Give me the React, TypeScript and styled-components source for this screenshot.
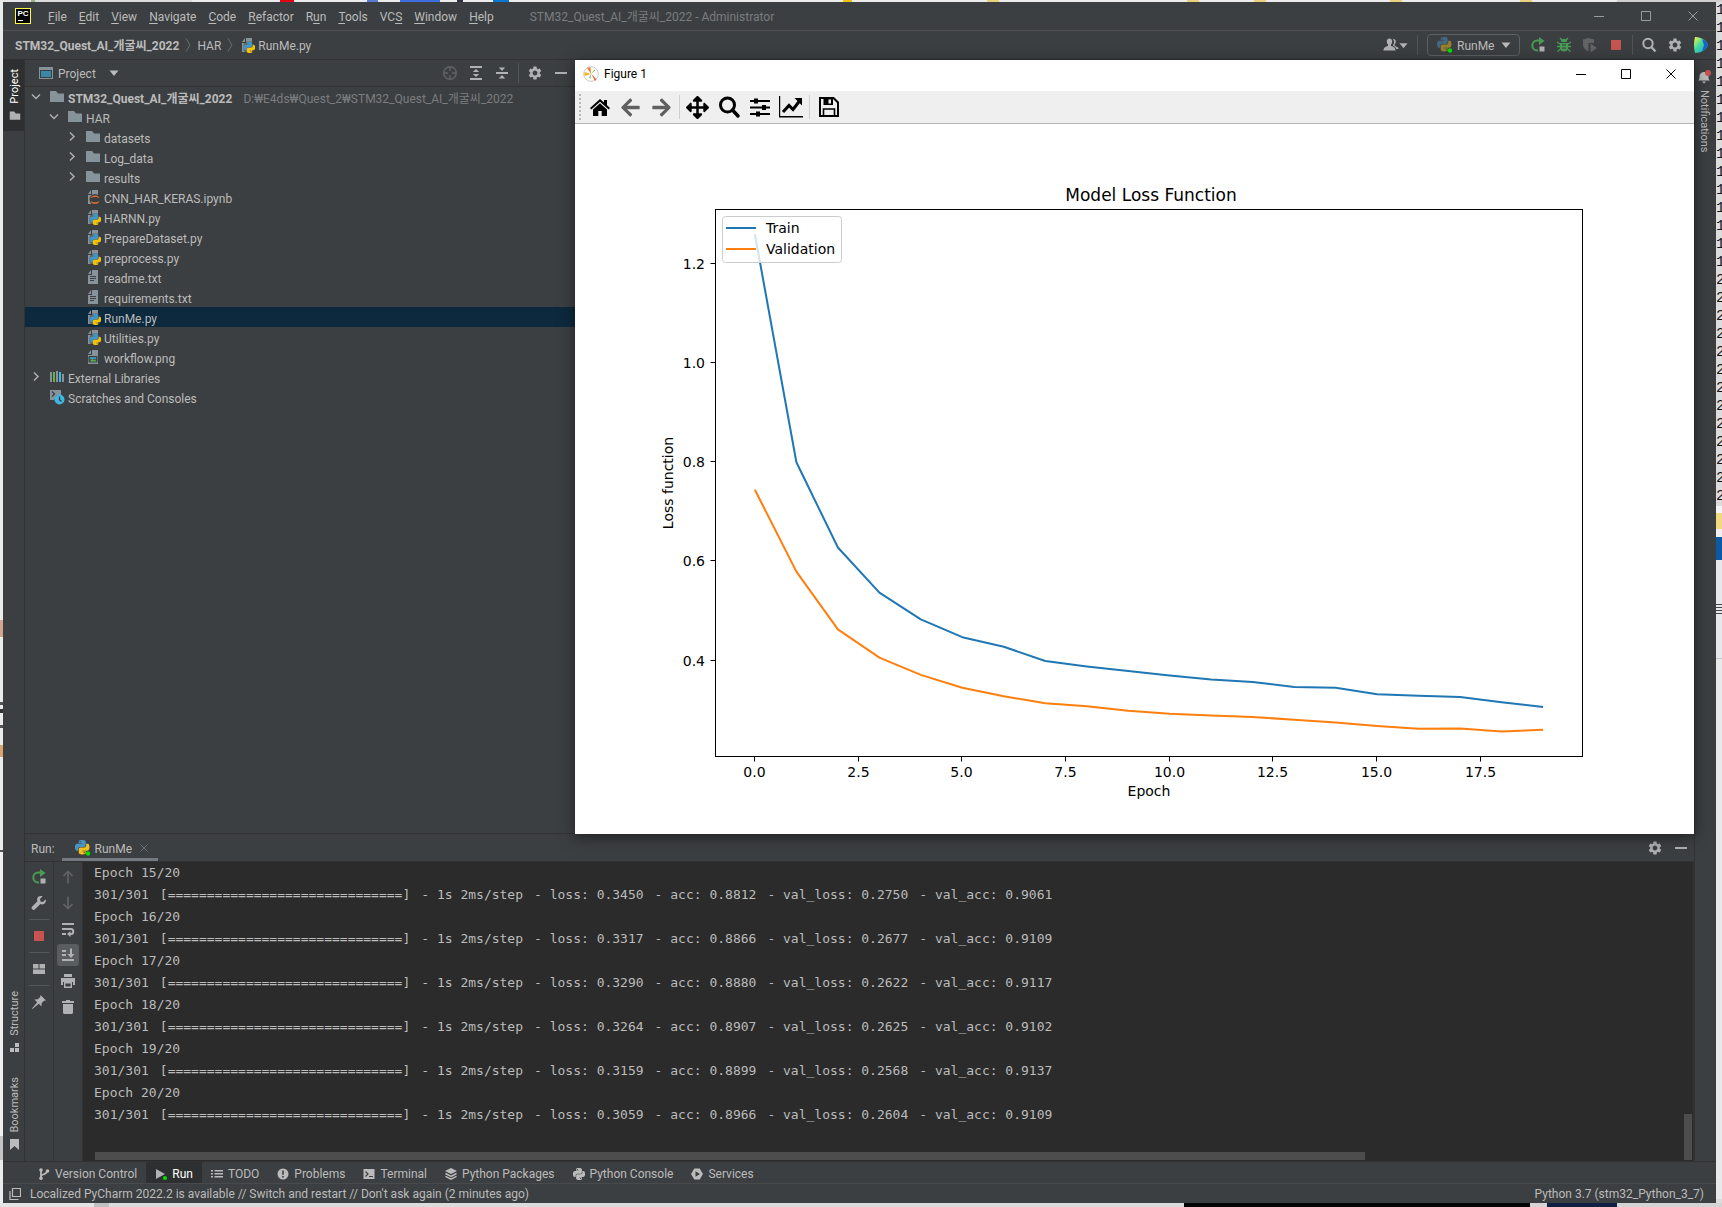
import React from 'react';
import styled, { createGlobalStyle, css } from 'styled-components';
import { MdSettings } from 'react-icons/md';
import { FaArrowLeft, FaArrowRight, FaArrowsAlt } from 'react-icons/fa';

const c = {
  panel: '#3c3f41',
  line: '#323232',
  seam: '#515151',
  text: '#bbbbbb',
  dim: '#7a7d7f',
  icon: '#afb1b3',
  faint: '#616365',
  console: '#2b2b2b',
  file: '#87939a',
  green: '#499c54',
  red: '#c75450',
};
const ui = `Roboto, "Noto Sans CJK KR", sans-serif`;

const GlobalStyle = createGlobalStyle`
  *, *::before, *::after { box-sizing: border-box; }
  html, body, #root { height: 100%; }
  body { margin: 0; overflow: hidden; font-family: ${ui}; font-size: 12px; line-height: 16px; color: ${c.text}; background: #e4e6e6; }
  button, select { font: inherit; color: inherit; background: none; border: 0; padding: 0; margin: 0; }
  ul { list-style: none; margin: 0; padding: 0; }
  svg { display: block; flex: none; }
`;

/* ---------- desktop and outer frame ---------- */

const Desktop = styled.div`
  height: 100vh;
  display: grid;
  grid-template-columns: 3px minmax(0, 1fr) 6px;
  grid-template-rows: 2px minmax(0, 1fr) 4px;
`;
const TopSliver = styled.div`
  grid-column: 1 / -1;
  background: linear-gradient(90deg, #e6e6e6 0 31px, #9ab07c 31px 35px, #dcdcdc 35px 192px, #ececec 192px 280px, #e60012 280px 294px, #ececec 294px 367px, #5a7ad8 367px 378px, #ececec 378px 400px, #3d6fe0 400px 440px, #ececec 440px 457px, #2f3440 457px 463px, #ececec 463px 493px, #0a78d4 493px 509px, #ececec 509px 843px, #f0c400 843px 852px, #ececec 852px 987px, #e8d27c 987px 999px, #ececec 999px 1187px, #e8d27c 1187px 1199px, #ececec 1199px 1254px, #e8d27c 1254px 1266px, #ececec 1266px 1390px, #e8d27c 1390px 1402px, #ececec 1402px 1520px, #e8d27c 1520px 1532px, #ececec 1532px 1617px, #cfcfcf 1617px);
`;
const LeftSliver = styled.div`
  background: linear-gradient(180deg, #e9eceb 0 618px, #d3a58e 618px 635px, #e9eceb 635px 700px, #555 700px 703px, #e9eceb 703px 707px, #333 707px 711px, #e9eceb 711px 723px, #555 723px 726px, #e9eceb 726px 743px, #d9a46e 743px 755px, #e9eceb 755px 848px, #555 848px 850px, #f0f0f0 850px 1134px, #c4c4c4 1134px 1158px, #e9eceb 1158px);
`;
const BottomSliver = styled.div`
  grid-column: 1 / -1;
  background: linear-gradient(90deg, #e4e4e4 0 94px, #c0c0c0 94px 109px, #dcdcdc 109px 1184px, #050505 1184px 1530px, #d8d4d6 1530px 1547px, #101f42 1547px 1617px, #d4d4d4 1617px);
`;
const RightSliver = styled.div`
  overflow: hidden;
  background: #dcdcdc;
  color: #14141e;
  font: 15px/18px "Liberation Mono", monospace;
  display: flex;
  flex-direction: column;
`;
const Swatch = styled.div<{ $h: number; $bg: string }>`
  flex: none;
  height: ${p => p.$h}px;
  background: ${p => p.$bg};
`;
const Ide = styled.div`
  background: ${c.panel};
  display: flex;
  flex-direction: column;
  min-width: 0;
  min-height: 0;
`;

/* ---------- shared pieces ---------- */

const IconButton = styled.button<{ $w?: number; $h?: number; $on?: boolean; $fg?: string }>`
  flex: none;
  display: flex;
  align-items: center;
  justify-content: center;
  width: ${p => p.$w ?? 26}px;
  height: ${p => p.$h ?? 22}px;
  border-radius: 3px;
  color: ${p => p.$fg ?? c.icon};
  background: ${p => (p.$on ? '#5a5d5f' : 'transparent')};
`;
const VRule = styled.span<{ $h?: number; $m?: number; $c?: string }>`
  flex: none;
  width: 1px;
  height: ${p => p.$h ?? 20}px;
  margin: 0 ${p => p.$m ?? 4}px;
  background: ${p => p.$c ?? '#515457'};
`;
const Spacer = styled.span`
  flex: 1;
`;

/* ---------- title / menu bar ---------- */

const MenuBar = styled.header`
  flex: none;
  height: 29px;
  display: flex;
  align-items: center;
  padding-left: 12px;
  border-bottom: 1px solid ${c.seam};
`;
const Logo = styled.span`
  width: 16px;
  height: 16px;
  margin-right: 11px;
  border: 1px solid #fcf84a;
  background: #000;
  color: #fff;
  font: bold 8px/9px "Liberation Sans", sans-serif;
  text-align: center;
  &::after {
    content: '';
    display: block;
    width: 5px;
    height: 1px;
    margin: 2px 0 0 2px;
    background: #fff;
  }
`;
const MenuItem = styled.button`
  padding: 2px 6px 0;
  u { text-underline-offset: 2px; }
`;
const WindowTitle = styled.span`
  margin-left: 30px;
  padding-top: 1px;
  color: ${c.dim};
`;
const WindowButtons = styled.div<{ $fg: string }>`
  display: flex;
  color: ${p => p.$fg};
`;

/* ---------- navigation bar ---------- */

const NavBar = styled.nav`
  flex: none;
  height: 29px;
  display: flex;
  align-items: center;
  padding: 0 2px 0 12px;
  border-bottom: 1px solid ${c.line};
`;
const Crumb = styled.a<{ $bold?: boolean }>`
  display: flex;
  align-items: center;
  gap: 3px;
  color: inherit;
  text-decoration: none;
  font-weight: ${p => (p.$bold ? 700 : 400)};
  span { padding-top: 2px; }
`;
const RunConfig = styled.label`
  width: 93px;
  height: 22px;
  margin: 0 5px 0 5px;
  padding: 0 8px 0 9px;
  display: flex;
  align-items: center;
  gap: 4px;
  border: 1px solid #5e6163;
  border-radius: 4px;
`;
const BareSelect = styled.select`
  appearance: none;
  flex: 1;
  min-width: 0;
  padding-top: 2px;
  outline: 0;
`;

/* ---------- body ---------- */

const Body = styled.div`
  flex: 1;
  min-height: 0;
  display: flex;
`;
const Stripe = styled.aside<{ $side: 'left' | 'right' }>`
  flex: none;
  width: 22px;
  display: flex;
  flex-direction: column;
  font-size: 11px;
  ${p => (p.$side === 'left' ? css`border-right: 1px solid ${c.line}; padding-bottom: 11px;` : css`border-left: 1px solid ${c.line};`)}
`;
const StripeTab = styled.button<{ $active?: boolean; $flip?: boolean; $h?: number }>`
  flex: none;
  width: 21px;
  height: ${p => p.$h ?? 86}px;
  display: flex;
  flex-direction: column;
  align-items: center;
  justify-content: ${p => (p.$active ? 'center' : p.$flip ? 'flex-end' : 'flex-start')};
  gap: 6px;
  background: ${p => (p.$active ? '#2d2f30' : 'transparent')};
  color: ${p => (p.$active ? '#ffffff' : c.text)};
  padding: ${p => (p.$flip ? '0 0 0 2px' : '10px 3px 0 0')};
  span {
    writing-mode: vertical-rl;
    transform: ${p => (p.$flip ? 'rotate(180deg)' : 'none')};
  }
`;
const Center = styled.main`
  flex: 1;
  min-width: 0;
  display: flex;
  flex-direction: column;
`;
const Upper = styled.div`
  flex: 1;
  min-height: 0;
  display: flex;
`;

const ProjectPane = styled.section`
  flex: none;
  width: 550px;
  border-bottom: 1px solid ${c.line};
`;
const PaneHeader = styled.div`
  height: 27px;
  display: flex;
  align-items: center;
  padding: 0 1px 0 13px;
  border-bottom: 1px solid ${c.line};
`;
const ViewPicker = styled.label`
  display: flex;
  align-items: center;
  gap: 4px;
  width: 81px;
`;
const TreeRow = styled.li<{ $depth: number; $selected?: boolean }>`
  height: 20px;
  display: flex;
  align-items: center;
  padding-left: ${p => 3 + p.$depth * 18}px;
  background: ${p => (p.$selected ? '#0d293e' : 'transparent')};
  white-space: nowrap;
`;
const Twisty = styled.span`
  width: 16px;
  margin-right: 5px;
  display: flex;
  justify-content: center;
  color: #adadad;
`;
const TreeLabel = styled.span<{ $bold?: boolean }>`
  margin-left: 3px;
  padding-top: 3px;
  font-weight: ${p => (p.$bold ? 700 : 400)};
`;
const TreePath = styled.span`
  margin-left: 11px;
  padding-top: 3px;
  color: ${c.dim};
`;

/* ---------- matplotlib window ---------- */

const Figure = styled.section`
  flex: 1;
  min-width: 0;
  position: relative;
  z-index: 1;
  display: flex;
  flex-direction: column;
  background: #fff;
  color: #000;
  box-shadow: 0 3px 14px rgba(0, 0, 0, 0.5);
`;
const FigureTitle = styled.div`
  flex: none;
  height: 31px;
  display: flex;
  align-items: center;
  gap: 5px;
  padding: 0 1px 3px 8px;
`;
const FigureTools = styled.div`
  flex: none;
  height: 33px;
  display: flex;
  align-items: center;
  padding-left: 4px;
  background: #efefef;
  border-bottom: 1px solid #b4b4b4;
`;
const Grip = styled.span`
  width: 2px;
  height: 26px;
  margin-right: 3px;
  background: repeating-linear-gradient(180deg, #b9b9b9 0 2px, transparent 2px 4px);
`;
const Canvas = styled.div`
  flex: 1;
  min-height: 0;
  svg { width: 100%; height: 100%; }
  text { font-family: "DejaVu Sans", sans-serif; font-size: 14px; }
`;

/* ---------- run panel ---------- */

const RunPanel = styled.section`
  flex: none;
  height: 327px;
  display: flex;
  flex-direction: column;
`;
const RunHeader = styled.div`
  flex: none;
  height: 28px;
  display: flex;
  align-items: center;
  padding-left: 6px;
  border-bottom: 1px solid ${c.line};
  > span { padding-top: 2px; }
`;
const RunTab = styled.button`
  align-self: stretch;
  width: 96px;
  margin-left: 7px;
  padding: 3px 10px 0 13px;
  display: flex;
  align-items: center;
  gap: 4px;
  border-bottom: 3px solid #747a80;
  span { padding-top: 2px; }
`;
const RunBody = styled.div`
  flex: 1;
  min-height: 0;
  display: flex;
`;
const ToolColumn = styled.div`
  flex: none;
  width: 29px;
  display: flex;
  flex-direction: column;
  align-items: center;
  padding-top: 4px;
  gap: 4px;
  border-right: 1px solid ${c.line};
`;
const HRule = styled.span`
  width: 20px;
  height: 1px;
  margin: 1px 0;
  background: #55585a;
`;
const Console = styled.div`
  flex: 1;
  min-width: 0;
  display: grid;
  grid-template: "out bar" minmax(0, 1fr) "scroll bar" 9px / minmax(0, 1fr) 10px;
  background: ${c.console};
  border-right: 1px solid ${c.line};
`;
const Output = styled.div`
  grid-area: out;
  padding-left: 11px;
  font: 13px/22px "DejaVu Sans Mono", monospace;
`;
const OutputLine = styled.div`
  display: flex;
  gap: 11px;
  white-space: pre;
`;
const VTrack = styled.div`
  grid-area: bar;
  display: flex;
  align-items: flex-end;
  padding: 0 1px 1px;
  &::after { content: ''; flex: 1; height: 46px; background: #4d4d4d; }
`;
const HTrack = styled.div`
  grid-area: scroll;
  padding: 0 0 1px 12px;
  &::after { content: ''; display: block; width: 80%; height: 8px; background: #4d4d4d; }
`;

/* ---------- bottom bars ---------- */

const ToolTabs = styled.div`
  flex: none;
  height: 23px;
  display: flex;
  padding-left: 26px;
  border-top: 1px solid ${c.line};
  border-bottom: 1px solid #484a4c;
`;
const ToolTab = styled.button<{ $active?: boolean }>`
  display: flex;
  align-items: center;
  gap: 5px;
  padding: 2px 9px 0;
  background: ${p => (p.$active ? '#2d2f30' : 'transparent')};
  color: ${p => (p.$active ? '#ffffff' : c.text)};
`;
const StatusBar = styled.footer`
  flex: none;
  height: 19px;
  display: flex;
  align-items: center;
  gap: 9px;
  padding: 0 12px 0 6px;
`;

/* ---------- icons ---------- */

type IP = { children: React.ReactNode; s?: number; v?: number };
const I = ({ children, s = 16, v = 16 }: IP) => (
  <svg width={s} height={s} viewBox={`0 0 ${v} ${v}`} fill="currentColor" aria-hidden="true">{children}</svg>
);

const pyTop = 'M14.25.18l.9.2.73.26.59.3.45.32.34.34.25.34.16.33.1.3.04.26.02.2-.01.13V8.5l-.05.63-.13.55-.21.46-.26.38-.3.31-.33.25-.35.19-.35.14-.33.1-.3.07-.26.04-.21.02H8.77l-.69.05-.59.14-.5.22-.41.27-.33.32-.27.35-.2.36-.15.37-.1.35-.07.32-.04.27-.02.21v3.06H3.17l-.21-.03-.28-.07-.32-.12-.35-.18-.36-.26-.36-.36-.35-.46-.32-.59-.28-.73-.21-.88-.14-1.05-.05-1.23.06-1.22.16-1.04.24-.87.32-.71.36-.57.4-.44.42-.33.42-.24.4-.16.36-.1.32-.05.24-.01h.16l.06.01h8.16v-.83H6.18l-.01-2.75-.02-.37.05-.34.11-.31.17-.28.25-.26.31-.23.38-.2.44-.18.51-.15.58-.12.64-.1.71-.06.77-.04.84-.02 1.27.05zm-6.3 1.98l-.23.33-.08.41.08.41.23.34.33.22.41.09.41-.09.33-.22.23-.34.08-.41-.08-.41-.23-.33-.33-.22-.41-.09-.41.09z';
const pyBottom = 'M21.1 6.11l.28.06.32.12.35.18.36.27.36.35.35.47.32.59.28.73.21.88.14 1.04.05 1.23-.06 1.23-.16 1.04-.24.86-.32.71-.36.57-.4.45-.42.33-.42.24-.4.16-.36.09-.32.05-.24.02-.16-.01h-8.22v.82h5.84l.01 2.76.02.36-.05.34-.11.31-.17.29-.25.25-.31.24-.38.2-.44.17-.51.15-.58.13-.64.09-.71.07-.77.04-.84.01-1.27-.04-1.07-.14-.9-.2-.73-.25-.59-.3-.45-.33-.34-.34-.25-.34-.16-.33-.1-.3-.04-.25-.02-.2.01-.13v-5.34l.05-.64.13-.54.21-.46.26-.38.3-.32.33-.24.35-.2.35-.14.33-.1.3-.06.26-.04.21-.02.13-.01h5.84l.69-.05.59-.14.5-.21.41-.28.33-.32.27-.35.2-.36.15-.36.1-.35.07-.32.04-.28.02-.21V6.07h2.09l.14.01zm-6.47 14.25l-.23.33-.08.41.08.41.23.33.33.23.41.08.41-.08.33-.23.23-.33.08-.41-.08-.41-.23-.33-.33-.23-.41-.08-.41.08z';

const PyRun = ({ muted }: { muted?: boolean }) => (
  <I>
    <g transform="scale(.6)" opacity={muted ? 0.5 : 1}>
      <path d={pyTop} fill="#4a94c2" />
      <path d={pyBottom} fill="#f2c01c" />
    </g>
    <circle cx="13" cy="13.5" r="2.2" fill="#00e000" />
  </I>
);
const page = 'M7 1v5H3v9h10V1zM6 1 3 5h3z';
const PyFile = () => (
  <I>
    <path d={page} fill={c.file} />
    <g transform="translate(5 5) scale(.46)">
      <rect x="-1" y="-1" width="26" height="26" rx="9" fill={c.panel} opacity=".55" />
      <path d={pyTop} fill="#3f97cc" />
      <path d={pyBottom} fill="#f5c400" />
    </g>
  </I>
);
const NotebookFile = () => (
  <I>
    <path d={page} fill={c.file} />
    <circle cx="10" cy="10.500" r="5.500" fill={c.panel} />
    <path d="M5.500 9.300c1.200-3.800 7.800-3.800 9 0-2.500-1.800-6.500-1.800-9 0zM5.500 12c1.200 3.800 7.800 3.800 9 0-2.500 1.800-6.500 1.800-9 0z" fill="#e8702a" />
  </I>
);
const TextFile = () => (
  <I>
    <path d={page} fill={c.file} />
    <path d="M5 7.500h6M5 9.500h6M5 11.500h4" stroke={c.panel} strokeWidth="1" />
  </I>
);
const ImageFile = () => (
  <I>
    <path d={page} fill={c.file} />
    <path d="M4 7.500h8v5.500H4z" fill="#3a5a60" stroke={c.panel} />
    <path d="M5 12.500l2-2.500 2 1.500 1-1 1.500 2z" fill="#62b543" />
    <path d="M5 8.500h6v1.200H5z" fill="#40b6e0" />
  </I>
);
const Folder = ({ s = 16, fill = c.file }: { s?: number; fill?: string }) => (
  <I s={s}><path d="M1 2h6l2 2.500h6V13H1z" fill={fill} /></I>
);
const Libraries = () => (
  <I>
    <path d="M1 3h2v10H1zM7 2h2v11H7zM13 5h2v8h-2z" fill={c.file} />
    <path d="M4 3h2v10H4z" fill="#62b543" />
    <path d="M10 3h2v10h-2z" fill="#40b6e0" />
  </I>
);
const Scratches = () => (
  <I>
    <path d="M1 1h11v5H8l-3 5H1z" fill={c.file} />
    <path d="M3 2.500l2.500 2.500L3 7.500" fill="none" stroke={c.panel} strokeWidth="1.300" />
    <circle cx="10.500" cy="10.500" r="5" fill="#40b6e0" />
    <path d="M10.500 7.500v3.300l2 1.700" fill="none" stroke="#2b3a42" strokeWidth="1.200" />
  </I>
);
const ChevRight = () => <I s={12} v={12}><path d="M4 1.500 8 5.500 4 9.500" fill="none" stroke="currentColor" strokeWidth="1.500" /></I>;
const ChevDown = () => <I s={12} v={12}><path d="M2 3.500l4 4 4-4" fill="none" stroke="currentColor" strokeWidth="1.500" /></I>;
const CrumbSep = () => (
  <svg width="18" height="16" viewBox="0 0 18 16" aria-hidden="true"><path d="M7 1.500l4 6.500-4 6.500" fill="none" stroke="#6a6d6f" /></svg>
);
const Caret = ({ s = 10 }: { s?: number }) => <I s={s} v={10}><path d="M.5 2.500h9L5 8z" /></I>;
const Gear = () => <MdSettings size={16} />;
const Minus = () => <I><path d="M2 7h12v2H2z" /></I>;
const Rerun = () => (
  <I>
    <path d="M9.500 3.500H7.300a5 5 0 0 0 0 10H8" fill="none" stroke={c.green} strokeWidth="2" />
    <path d="M9 0l5.500 4L9 8z" fill={c.green} />
    <path d="M9.500 9.500h5v5h-5z" fill={c.icon} />
  </I>
);
const Stop = () => <I><path d="M3 3h10v10H3z" fill={c.red} /></I>;
const Bug = () => (
  <I>
    <path d="M5 3.500C5 1.500 11 1.500 11 3.500L10.500 5h-5zM4 6h8v5.500c0 4-8 4-8 0z" fill={c.green} />
    <path d="M1 5l3 2M15 5l-3 2M1 9.500h14M1.500 14.500l3-2.500M14.500 14.500l-3-2.500M4 1l2 2M12 1l-2 2" stroke={c.green} strokeWidth="1.500" />
    <path d="M6 8h4M6 11h4" stroke={c.panel} />
  </I>
);
const Coverage = () => (
  <I>
    <path d="M1 2.500l5.500-1.500 5.500 1.500V6H6.500v8.500C3 13 1 10.500 1 7.500z" fill={c.faint} />
    <path d="M8.500 6.500 15 11l-6.500 4.500z" fill={c.faint} />
  </I>
);
const People = () => (
  <I>
    <path d="M6.500 1.500c3.300 0 3.300 4.500 1.500 6v1.500c2.500.8 4.500 1.500 4.500 4.500H.5c0-3 2-3.700 4.500-4.500V7.500c-1.800-1.500-1.800-6 1.500-6z" />
    <path d="M10 2c3.500-.5 3.300 4 1.700 5.300V9c1.800.6 3.800 1.200 3.800 3h-2.200c-.5-1.600-1.800-2.500-3.300-3.200V8c1.400-1.600 1.500-4.300 0-6z" />
  </I>
);
const Search = () => (
  <I><circle cx="7" cy="6.500" r="4.700" fill="none" stroke="currentColor" strokeWidth="2" /><path d="M10.300 10l4.200 4.500" stroke="currentColor" strokeWidth="2.400" /></I>
);
const Toolbox = () => (
  <I>
    <defs>
      <linearGradient id="tb" x1="0" y1="0" x2="1" y2="1">
        <stop offset="0" stopColor="#fcf84a" /><stop offset=".45" stopColor="#3dd9a0" /><stop offset="1" stopColor="#1aa0e8" />
      </linearGradient>
    </defs>
    <path d="M2 0c7 0 12 4 13 8-1 4-6 8-13 8-1.300-5-1.300-11 0-16z" fill="url(#tb)" />
    <path d="M9 2c3 1 5.500 3.500 6 6-.7 2.500-3 5-6 6.500L11 8z" fill="#1b62c4" />
  </I>
);
const Target = () => (
  <I><circle cx="8" cy="8" r="6.300" fill="none" stroke="currentColor" strokeWidth="1.400" /><path d="M8 2v4M8 10v4M2 8h4M10 8h4" stroke="currentColor" strokeWidth="1.400" /></I>
);
const ExpandAll = () => <I><path d="M2 1h12v2H2zM2 13h12v2H2zM8 4l3.200 3H4.800zM8 12l3.200-3H4.800z" /></I>;
const CollapseAll = () => <I><path d="M2 7h12v2H2zM8 6l3.200-3.500H4.800zM8 10l3.200 3.500H4.800z" /></I>;
const ProjectView = () => (
  <I><path d="M1 2h14v12H1z" fill={c.file} /><path d="M2 5h12v8H2z" fill={c.panel} /><path d="M3 6h10v6H3z" fill="#3b87a8" /></I>
);
const Wrench = () => <I><path d="M14.700 4.300 12 7 9.500 6.500 9 4l2.700-2.700C9.500.4 7 1.300 6.300 3.300c-.4 1-.3 2 .1 2.900L1.200 11.600a1.900 1.900 0 0 0 2.800 2.700l5.500-5.200c2.600 1.200 6.300-1 5.200-4.800z" /></I>;
const Layout = () => <I><path d="M2 3h5.500v4.500H2zM8.500 3H14v4.500H8.500zM2 8.500h12V13H2z" /></I>;
const Pin = () => <I><path d="M9.500 1 15 6.500l-2 .3-2.300 2.300-.2 3.400-2.700-2.700L1.500 15 1 14.500l5.200-6.300-2.700-2.700 3.400-.2L9.200 3z" /></I>;
const ArrowV = ({ down }: { down?: boolean }) => (
  <I><g transform={down ? 'rotate(180 8 8)' : undefined}><path d="M8 14.500V3M3.500 7 8 2.500 12.500 7" fill="none" stroke="currentColor" strokeWidth="1.700" /></g></I>
);
const SoftWrap = () => (
  <I><path d="M2 2h12v2H2zM2 12h4v2H2zM2 7h9v2H2z" /><path d="M11 8c3 0 3 5 0 5H9" fill="none" stroke="currentColor" strokeWidth="2" /><path d="M10.500 10v6L7 13z" /></I>
);
const ScrollEnd = () => <I><path d="M2 3h4v2H2zM2 7h4v2H2zM2 12h12v2H2zM10 1.500h2V7h2.500L11 11 7.500 7H10z" /></I>;
const Printer = () => <I><path d="M4 1h8v3H4zM1 5h14v7h-2V9H3v3H1z" /><path d="M4.700 9.700h6.600v4.600H4.700z" fill="none" stroke="currentColor" strokeWidth="1.400" /></I>;
const Trash = () => <I><path d="M6 1h4v1h4v2H2V2h4zM3 5h10v8.500c0 .8-.7 1.500-1.500 1.500h-7c-.8 0-1.500-.7-1.500-1.500z" /></I>;
const Close = ({ s = 10, fg = 'currentColor' }: { s?: number; fg?: string }) => <I s={s} v={10}><path d="M.5.5l9 9M9.500.5l-9 9" stroke={fg} /></I>;
const Minimize = () => <I s={10} v={10}><path d="M0 5h10v1H0z" /></I>;
const Maximize = () => <I s={10} v={10}><path d="M.5.5h9v9h-9z" fill="none" stroke="currentColor" /></I>;
const Bell = () => (
  <I s={14} v={14}><path d="M1 10.500c1.500-1 1.500-2 1.500-4C2.500 3.500 4.500 2 7 2s4.500 1.500 4.500 4.500c0 2 0 3 1.500 4zM5 11.500h4L7 13.500z" /><circle cx="11" cy="3" r="3" fill={c.red} /></I>
);
const StructureIcon = () => <I s={11} v={11}><path d="M6 1h4v4H6zM1 6h4v4H1zM6 6h4v4H6z" /></I>;
const Bookmark = () => <I s={11} v={11}><path d="M1 0h9v11L5.500 7 1 11z" /></I>;
const Branch = () => (
  <I s={12} v={12}><path d="M3 2v8M9 3c0 4-6 3-6 5" fill="none" stroke="currentColor" strokeWidth="1.800" /><circle cx="3" cy="2" r="1.800" /><circle cx="9.500" cy="3" r="1.800" /><circle cx="3" cy="10.200" r="1.800" /></I>
);
const PlayDot = () => <I s={12} v={12}><path d="M1 1l9 5-9 5z" fill={c.icon} /><circle cx="10" cy="10" r="2" fill="#00e000" /></I>;
const ListIcon = () => <I s={12} v={12}><path d="M0 2h2v1.500H0zM3.500 2H12v1.500H3.500zM0 5h2v1.500H0zM3.500 5H12v1.500H3.500zM0 8h2v1.500H0zM3.500 8H12v1.500H3.500z" /></I>;
const Warn = () => <I s={12} v={12}><circle cx="6" cy="6" r="5.500" /><path d="M5.200 2.500h1.600v4.300H5.200zM5.200 8h1.600v1.500H5.200z" fill={c.panel} /></I>;
const TerminalIcon = () => <I s={12} v={12}><path d="M.5 1h11v10H.5z" /><path d="M2.500 3.500 5 6 2.500 8.500M6 8.500h4" fill="none" stroke={c.panel} strokeWidth="1.200" /></I>;
const Layers = () => <I s={12} v={12}><path d="M6 0l6 3-6 3-6-3z" /><path d="M.5 5.500 6 8.300l5.500-2.800M.5 8.300 6 11.100l5.500-2.800" fill="none" stroke="currentColor" strokeWidth="1.500" /></I>;
const PyMono = () => <I s={12} v={24}><path d={pyTop} /><path d={pyBottom} /></I>;
const Services = () => <I s={12} v={12}><path d="M3.300.5h5.400L12 6l-3.300 5.500H3.300L0 6z" /><path d="M4.500 3.200 9 6 4.500 8.800z" fill={c.panel} /></I>;
const StatusWindows = () => <I s={12} v={12}><path d="M3.500.5h8v8h-8zM1 3v8.500h8.500" fill="none" stroke="currentColor" strokeWidth="1.200" /></I>;

const MplLogo = () => (
  <I>
    <circle cx="8" cy="8" r="7.300" fill="#fff" stroke="#c9c9c9" />
    <path d="M8 8 4 1.800l3.500-.5z" fill="#f07c28" />
    <path d="M8 8 1.500 6v4z" fill="#f5b417" />
    <path d="M8 7.500l5.500 6-1.500 1.500z" fill="#e8602a" />
    <path d="M8 8l3.500-4.500.8.800z" fill="#8cc63f" />
    <path d="M8 8l-2 4 1.500.5z" fill="#5ab4a0" />
  </I>
);
const Home = () => <I s={22} v={22}><path d="M11 3 1 12l1.300 1.400L11 5.700l8.700 7.700L21 12l-3-2.700V4h-3v2.600z" /><path d="M11 7.200 4 13.500V20h5.300v-5h3.400v5H18v-6.500z" /></I>;
const Magnifier = () => <I s={22} v={22}><circle cx="9.500" cy="9" r="7" fill="none" stroke="currentColor" strokeWidth="3" /><path d="M14.500 14l5.500 6" stroke="currentColor" strokeWidth="3.400" strokeLinecap="round" /></I>;
const Sliders = () => <I s={22} v={22}><path d="M1 4h20v2H1zM1 10.500h20v2H1zM1 17h20v2H1z" /><path d="M5 2.500h4v5H5zM13 9h4v5h-4zM7 15.500h4v5H7z" /></I>;
const LineChart = () => (
  <I s={24} v={24}><path d="M0 1h1.200v20H24v1.500H0z" /><path d="M4 17l6-6.500 4 4L20.500 6" fill="none" stroke="currentColor" strokeWidth="3" /><path d="M15.500 3H23v7.500z" /></I>
);
const Floppy = () => (
  <I s={22} v={22}><path d="M2 2h13.500L20 6.500V20H2z" fill="none" stroke="currentColor" strokeWidth="2" /><path d="M5.500 2H15v7H5.500z" /><path d="M10.500 3.500H13v4h-2.500z" fill="#efefef" /><path d="M5.500 20v-7h11v7" fill="none" stroke="currentColor" strokeWidth="1.600" /></I>
);

/* ---------- data ---------- */

const PROJECT = 'STM32_Quest_AI_개굴씨_2022';
const menus: [string, string, string][] = [
  ['', 'F', 'ile'], ['', 'E', 'dit'], ['', 'V', 'iew'], ['', 'N', 'avigate'], ['', 'C', 'ode'], ['', 'R', 'efactor'],
  ['R', 'u', 'n'], ['', 'T', 'ools'], ['VC', 'S', ''], ['', 'W', 'indow'], ['', 'H', 'elp'],
];

type Node = { label: string; depth: number; icon: React.ReactNode; open?: boolean; path?: string; selected?: boolean };
const tree: Node[] = [
  { label: PROJECT, depth: 0, icon: <Folder />, open: true, path: 'D:₩E4ds₩Quest_2₩STM32_Quest_AI_개굴씨_2022' },
  { label: 'HAR', depth: 1, icon: <Folder />, open: true },
  { label: 'datasets', depth: 2, icon: <Folder />, open: false },
  { label: 'Log_data', depth: 2, icon: <Folder />, open: false },
  { label: 'results', depth: 2, icon: <Folder />, open: false },
  { label: 'CNN_HAR_KERAS.ipynb', depth: 2, icon: <NotebookFile /> },
  { label: 'HARNN.py', depth: 2, icon: <PyFile /> },
  { label: 'PrepareDataset.py', depth: 2, icon: <PyFile /> },
  { label: 'preprocess.py', depth: 2, icon: <PyFile /> },
  { label: 'readme.txt', depth: 2, icon: <TextFile /> },
  { label: 'requirements.txt', depth: 2, icon: <TextFile /> },
  { label: 'RunMe.py', depth: 2, icon: <PyFile />, selected: true },
  { label: 'Utilities.py', depth: 2, icon: <PyFile /> },
  { label: 'workflow.png', depth: 2, icon: <ImageFile /> },
  { label: 'External Libraries', depth: 0, icon: <Libraries />, open: false },
  { label: 'Scratches and Consoles', depth: 0, icon: <Scratches /> },
];

const epochs = [
  [15, '0.3450', '0.8812', '0.2750', '0.9061'],
  [16, '0.3317', '0.8866', '0.2677', '0.9109'],
  [17, '0.3290', '0.8880', '0.2622', '0.9117'],
  [18, '0.3264', '0.8907', '0.2625', '0.9102'],
  [19, '0.3159', '0.8899', '0.2568', '0.9137'],
  [20, '0.3059', '0.8966', '0.2604', '0.9109'],
];

const toolTabs: [string, React.ReactNode][] = [
  ['Version Control', <Branch />], ['Run', <PlayDot />], ['TODO', <ListIcon />], ['Problems', <Warn />],
  ['Terminal', <TerminalIcon />], ['Python Packages', <Layers />], ['Python Console', <PyMono />], ['Services', <Services />],
];

const train = [1.26, 0.8, 0.628, 0.537, 0.483, 0.447, 0.4276, 0.399, 0.388, 0.379, 0.37, 0.3617, 0.3566, 0.3465, 0.345, 0.3317, 0.329, 0.3264, 0.3159, 0.3059];
const validation = [0.7444, 0.5794, 0.463, 0.4058, 0.371, 0.345, 0.3277, 0.3139, 0.3075, 0.2987, 0.2924, 0.289, 0.286, 0.2805, 0.275, 0.2677, 0.2622, 0.2625, 0.2568, 0.2604];

/* ---------- loss chart ---------- */

const box = { l: 140.5, t: 85.5, r: 1007.5, b: 632.5 };
const px = (e: number) => box.l + (e + 0.95) * ((box.r - box.l) / 20.9);
const py = (v: number) => 536.5 - (v - 0.4) * 495.6;
const points = (d: number[]) => d.map((v, i) => `${px(i).toFixed(1)},${py(v).toFixed(1)}`).join(' ');

const LossChart = () => (
  <svg viewBox="0 0 1119 710" role="img" aria-label="Model Loss Function">
    <text x="576" y="77" textAnchor="middle" style={{ fontSize: 17 }}>Model Loss Function</text>
    <polyline points={points(train)} fill="none" stroke="#1f77b4" strokeWidth="2" strokeLinejoin="round" />
    <polyline points={points(validation)} fill="none" stroke="#ff7f0e" strokeWidth="2" strokeLinejoin="round" />
    <rect x={box.l} y={box.t} width={box.r - box.l} height={box.b - box.t} fill="none" stroke="#000" />
    {[0, 2.5, 5, 7.5, 10, 12.5, 15, 17.5].map(v => {
      const x = Math.round(px(v)) - 0.5;
      return (
        <g key={v}>
          <path d={`M${x} ${box.b}v5`} stroke="#000" />
          <text x={x} y="653" textAnchor="middle">{v.toFixed(1)}</text>
        </g>
      );
    })}
    {[0.4, 0.6, 0.8, 1.0, 1.2].map(v => {
      const y = Math.round(py(v)) - 0.5;
      return (
        <g key={v}>
          <path d={`M${box.l} ${y}h-5`} stroke="#000" />
          <text x="130" y={y + 5} textAnchor="end">{v.toFixed(1)}</text>
        </g>
      );
    })}
    <text x="574" y="672" textAnchor="middle">Epoch</text>
    <text transform="translate(98 359) rotate(-90)" textAnchor="middle">Loss function</text>
    <rect x="147.500" y="92.500" width="119" height="46" rx="3" fill="#fff" fillOpacity=".8" stroke="#ccc" />
    <path d="M151 104h30" stroke="#1f77b4" strokeWidth="2" />
    <path d="M151 125h30" stroke="#ff7f0e" strokeWidth="2" />
    <text x="191" y="109">Train</text>
    <text x="191" y="130">Validation</text>
  </svg>
);

/* ---------- app ---------- */

const CaptionButtons = ({ fg, w }: { fg: string; w: number }) => (
  <WindowButtons $fg={fg}>
    <IconButton $w={w} $fg={fg} aria-label="Minimize"><Minimize /></IconButton>
    <IconButton $w={w} $fg={fg} aria-label="Maximize"><Maximize /></IconButton>
    <IconButton $w={w} $fg={fg} aria-label="Close"><Close /></IconButton>
  </WindowButtons>
);

export default function App() {
  return (
    <Desktop>
      <GlobalStyle />
      <TopSliver />
      <LeftSliver />
      <Ide>
        <MenuBar>
          <Logo>PC</Logo>
          {menus.map(([a, key, b]) => (
            <MenuItem key={a + key + b}>{a}<u>{key}</u>{b}</MenuItem>
          ))}
          <WindowTitle>{PROJECT} - Administrator</WindowTitle>
          <Spacer />
          <CaptionButtons fg="#9a9c9e" w={47} />
        </MenuBar>

        <NavBar aria-label="Navigation bar">
          <Crumb href="#project" $bold><span>{PROJECT}</span></Crumb>
          <CrumbSep />
          <Crumb href="#har"><span>HAR</span></Crumb>
          <CrumbSep />
          <Crumb href="#runme"><PyFile /><span>RunMe.py</span></Crumb>
          <Spacer />
          <IconButton $w={36} aria-label="Account"><People /><Caret s={9} /></IconButton>
          <VRule />
          <RunConfig>
            <PyRun muted />
            <BareSelect aria-label="Run configuration"><option>RunMe</option></BareSelect>
            <Caret />
          </RunConfig>
          <IconButton aria-label="Rerun"><Rerun /></IconButton>
          <IconButton aria-label="Debug"><Bug /></IconButton>
          <IconButton aria-label="Run with coverage"><Coverage /></IconButton>
          <IconButton aria-label="Stop"><Stop /></IconButton>
          <VRule $m={3} />
          <IconButton aria-label="Search"><Search /></IconButton>
          <IconButton aria-label="Settings"><Gear /></IconButton>
          <IconButton aria-label="Toolbox"><Toolbox /></IconButton>
        </NavBar>

        <Body>
          <Stripe $side="left">
            <StripeTab $active $flip $h={71}><span>Project</span><Folder s={12} fill={c.icon} /></StripeTab>
            <Spacer />
            <StripeTab $flip><span>Structure</span><StructureIcon /></StripeTab>
            <StripeTab $flip $h={97}><span>Bookmarks</span><Bookmark /></StripeTab>
          </Stripe>

          <Center>
            <Upper>
              <ProjectPane>
                <PaneHeader>
                  <ViewPicker>
                    <ProjectView />
                    <BareSelect aria-label="Project view"><option>Project</option></BareSelect>
                    <Caret />
                  </ViewPicker>
                  <Spacer />
                  <IconButton $fg={c.faint} aria-label="Select opened file"><Target /></IconButton>
                  <IconButton aria-label="Expand all"><ExpandAll /></IconButton>
                  <IconButton aria-label="Collapse all"><CollapseAll /></IconButton>
                  <VRule $m={3} />
                  <IconButton aria-label="Options"><Gear /></IconButton>
                  <IconButton aria-label="Hide"><Minus /></IconButton>
                </PaneHeader>
                <ul role="tree">
                  {tree.map(n => (
                    <TreeRow key={n.label} role="treeitem" aria-selected={!!n.selected} $depth={n.depth} $selected={n.selected}>
                      <Twisty>{n.open === undefined ? null : n.open ? <ChevDown /> : <ChevRight />}</Twisty>
                      {n.icon}
                      <TreeLabel $bold={!!n.path}>{n.label}</TreeLabel>
                      {n.path && <TreePath>{n.path}</TreePath>}
                    </TreeRow>
                  ))}
                </ul>
              </ProjectPane>

              <Figure aria-label="Figure 1">
                <FigureTitle>
                  <MplLogo />
                  <span>Figure 1</span>
                  <Spacer />
                  <CaptionButtons fg="#000000" w={45} />
                </FigureTitle>
                <FigureTools>
                  <Grip />
                  <IconButton $w={31} $fg="#000" aria-label="Home"><Home /></IconButton>
                  <IconButton $w={31} $fg="#606060" aria-label="Back"><FaArrowLeft size={21} /></IconButton>
                  <IconButton $w={31} $fg="#606060" aria-label="Forward"><FaArrowRight size={21} /></IconButton>
                  <VRule $h={24} $m={2} $c="#cfcfcf" />
                  <IconButton $w={31} $fg="#000" aria-label="Pan"><FaArrowsAlt size={23} /></IconButton>
                  <IconButton $w={31} $fg="#000" aria-label="Zoom"><Magnifier /></IconButton>
                  <IconButton $w={31} $fg="#000" aria-label="Configure subplots"><Sliders /></IconButton>
                  <IconButton $w={31} $fg="#000" aria-label="Edit axes"><LineChart /></IconButton>
                  <VRule $h={24} $m={3} $c="#cfcfcf" />
                  <IconButton $w={31} $fg="#000" aria-label="Save"><Floppy /></IconButton>
                </FigureTools>
                <Canvas><LossChart /></Canvas>
              </Figure>
            </Upper>

            <RunPanel>
              <RunHeader>
                <span>Run:</span>
                <RunTab><PyRun /><span>RunMe</span><Spacer /><Close s={8} fg="#77797b" /></RunTab>
                <Spacer />
                <IconButton aria-label="Run options"><Gear /></IconButton>
                <IconButton aria-label="Hide run panel"><Minus /></IconButton>
              </RunHeader>
              <RunBody>
                <ToolColumn>
                  <IconButton $w={22} aria-label="Rerun RunMe"><Rerun /></IconButton>
                  <IconButton $w={22} aria-label="Modify run configuration"><Wrench /></IconButton>
                  <HRule />
                  <IconButton $w={22} aria-label="Stop RunMe"><Stop /></IconButton>
                  <HRule />
                  <IconButton $w={22} aria-label="Restore layout"><Layout /></IconButton>
                  <HRule />
                  <IconButton $w={22} aria-label="Pin tab"><Pin /></IconButton>
                </ToolColumn>
                <ToolColumn>
                  <IconButton $w={22} $fg={c.faint} aria-label="Up"><ArrowV /></IconButton>
                  <IconButton $w={22} $fg={c.faint} aria-label="Down"><ArrowV down /></IconButton>
                  <IconButton $w={22} aria-label="Soft-wrap"><SoftWrap /></IconButton>
                  <IconButton $w={22} $on aria-label="Scroll to the end"><ScrollEnd /></IconButton>
                  <IconButton $w={22} aria-label="Print"><Printer /></IconButton>
                  <IconButton $w={22} aria-label="Clear all"><Trash /></IconButton>
                </ToolColumn>
                <Console>
                  <Output>
                    {epochs.map(([n, loss, acc, vLoss, vAcc]) => (
                      <React.Fragment key={n}>
                        <OutputLine><span>Epoch {n}/20</span></OutputLine>
                        <OutputLine>
                          <span>301/301</span>
                          <span>[{'='.repeat(30)}]</span>
                          <span>- 1s 2ms/step</span>
                          <span>- loss: {loss}</span>
                          <span>- acc: {acc}</span>
                          <span>- val_loss: {vLoss}</span>
                          <span>- val_acc: {vAcc}</span>
                        </OutputLine>
                      </React.Fragment>
                    ))}
                  </Output>
                  <VTrack />
                  <HTrack />
                </Console>
              </RunBody>
            </RunPanel>
          </Center>

          <Stripe $side="right">
            <StripeTab $h={100}><Bell /><span>Notifications</span></StripeTab>
          </Stripe>
        </Body>

        <ToolTabs>
          {toolTabs.map(([label, icon]) => (
            <ToolTab key={label} $active={label === 'Run'}>{icon}<span>{label}</span></ToolTab>
          ))}
        </ToolTabs>
        <StatusBar>
          <StatusWindows />
          <span>Localized PyCharm 2022.2 is available // Switch and restart // Don't ask again (2 minutes ago)</span>
          <Spacer />
          <span>Python 3.7 (stm32_Python_3_7)</span>
        </StatusBar>
      </Ide>
      <RightSliver aria-hidden="true">
        {Array.from({ length: 28 }, (_, i) => <span key={i}>{i < 15 ? '1' : '2'}</span>)}
        <Swatch $h={7} $bg="#f4f4f4" />
        <Swatch $h={16} $bg="#f0da80" />
        <Swatch $h={8} $bg="#f0f0f0" />
        <Swatch $h={23} $bg="#0a5aa4" />
        <Swatch $h={44} $bg="#e6e8ec" />
        <Swatch $h={10} $bg="repeating-linear-gradient(180deg, #444 0 1px, #e6e8ec 1px 3px)" />
        <Swatch $h={44} $bg="#e6e8ec" />
        <Swatch $h={1} $bg="#c4c4c4" />
        <Swatch $h={540} $bg="#e9e9e9" />
      </RightSliver>
      <BottomSliver />
    </Desktop>
  );
}
